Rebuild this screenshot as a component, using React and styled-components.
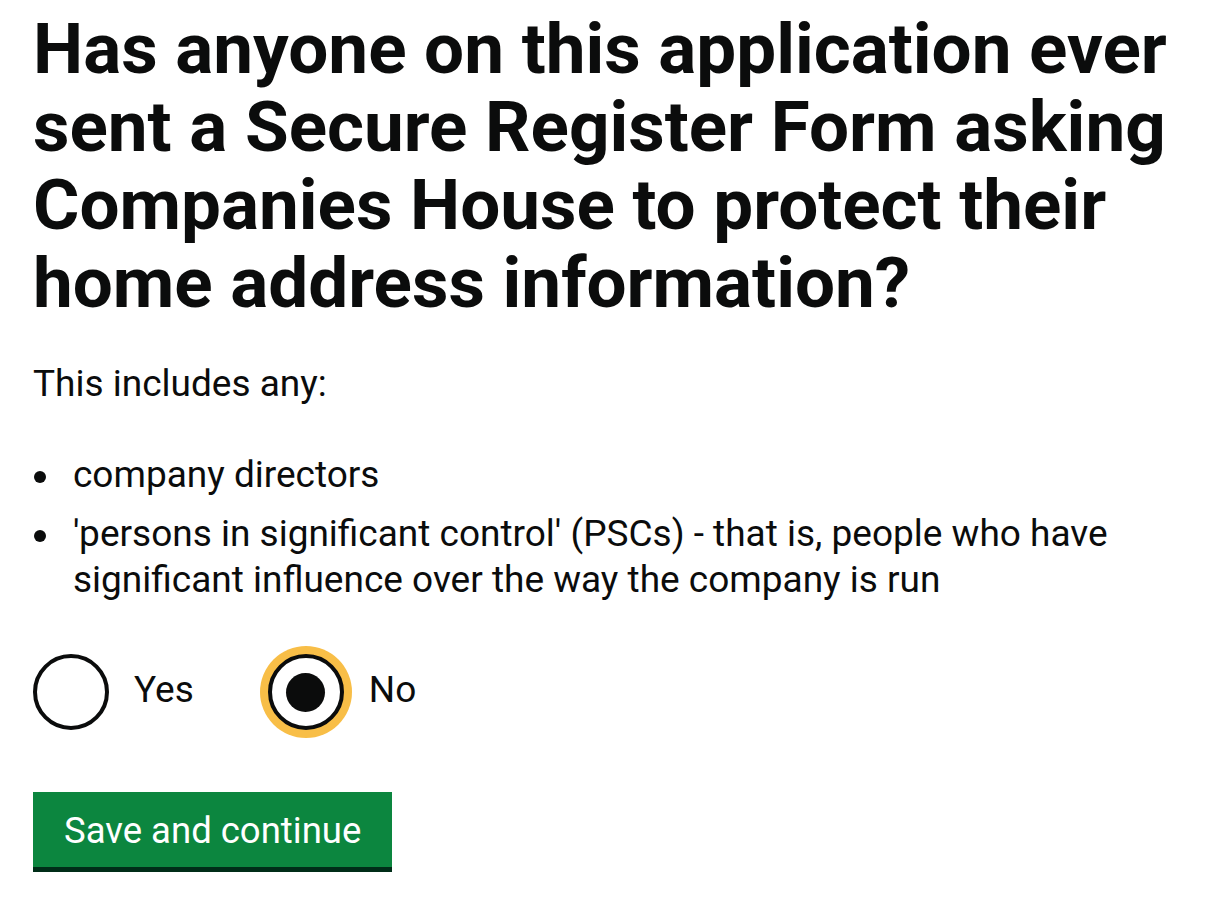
import React from "react";
import styled, { createGlobalStyle } from "styled-components";

const GlobalStyle = createGlobalStyle`
  html, body { margin: 0; padding: 0; background: #ffffff; }
  body {
    font-family: Roboto, "Noto Sans", Arial, sans-serif;
    color: #0b0c0c;
    -webkit-font-smoothing: antialiased;
  }
`;

const Page = styled.main`
  padding: 10px 0 40px 33px;
`;

const Heading = styled.h1`
  margin: 0 0 39px;
  font-size: 71px;
  line-height: 78px;
  font-weight: 700;
  color: #0b0c0c;
`;

const Body = styled.p`
  margin: 0 0 45px;
  font-size: 37px;
  line-height: 46px;
  font-weight: 400;
`;

const List = styled.ul`
  margin: 0 0 51px;
  padding-left: 40px;
  font-size: 37px;
  line-height: 46px;
  list-style: none;
`;

const Item = styled.li`
  position: relative;
  margin-bottom: 13px;
  &:last-child { margin-bottom: 0; }
  &::before {
    content: "";
    position: absolute;
    left: -39px;
    top: 19px;
    width: 12px;
    height: 12px;
    border-radius: 50%;
    background: #0b0c0c;
  }
`;

const Radios = styled.div`
  display: flex;
  align-items: center;
  margin-bottom: 62px;
`;

const RadioItem = styled.label`
  display: flex;
  align-items: center;
  margin-right: ${(p) => p.gapAfter || 0}px;
  cursor: pointer;
`;

const Circle = styled.span`
  box-sizing: border-box;
  width: 76px;
  height: 76px;
  border: 4px solid #0b0c0c;
  border-radius: 50%;
  background: #ffffff;
  flex-shrink: 0;
  box-shadow: ${(p) => (p.focused ? "0 0 0 8px #f8be47" : "none")};
  display: flex;
  align-items: center;
  justify-content: center;
`;

const Dot = styled.span`
  width: 39px;
  height: 39px;
  border-radius: 50%;
  background: #0b0c0c;
`;

const RadioLabel = styled.span`
  font-size: 37px;
  line-height: 46px;
  padding-left: 25px;
  position: relative;
  top: -2px;
`;

const Button = styled.button`
  display: inline-block;
  box-sizing: border-box;
  margin: 0;
  padding: 16px 31px 13px 31px;
  height: 75px;
  border: 0;
  border-radius: 0;
  background: #0c863f;
  color: #ffffff;
  font-family: Roboto, "Noto Sans", Arial, sans-serif;
  font-size: 36.5px;
  line-height: 46px;
  font-weight: 400;
  box-shadow: 0 5px 0 #002d18;
  cursor: pointer;
`;

export default function App() {
  return (
    <Page>
      <GlobalStyle />
      <Heading>
        Has anyone on this application ever sent a Secure Register Form asking
        Companies House to protect their home address information?
      </Heading>
      <Body>This includes any:</Body>
      <List>
        <Item>company directors</Item>
        <Item>
          'persons in significant control' (PSCs) - that is, people who have
          significant influence over the way the company is run
        </Item>
      </List>
      <Radios role="radiogroup">
        <RadioItem gapAfter={74}>
          <Circle />
          <RadioLabel>Yes</RadioLabel>
        </RadioItem>
        <RadioItem>
          <Circle focused>
            <Dot />
          </Circle>
          <RadioLabel>No</RadioLabel>
        </RadioItem>
      </Radios>
      <Button type="button">Save and continue</Button>
    </Page>
  );
}
